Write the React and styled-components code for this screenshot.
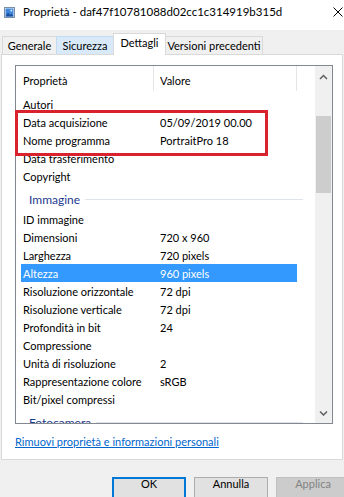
import React from 'react';
import styled, { createGlobalStyle } from 'styled-components';

const GlobalStyle = createGlobalStyle`
    html, body {
        margin: 0;
        padding: 0;
    }
    body {
        font-family: Lato, "Liberation Sans", sans-serif;
        font-size: 11px;
        color: #000;
    }
`

const Window = styled.div`
    width: 344px;
    height: 497px;
    overflow: hidden;
    background: #f0f0f0;
    display: flex;
    flex-direction: column;
`

const TitleBar = styled.div`
    height: 30px;
    flex: none;
    box-sizing: border-box;
    background: #fff;
    display: flex;
    align-items: flex-start;
    padding: 3px 0 0 4px;
`

const TitleIcon = styled.svg`
    margin: 4px 8px 0 0;
    flex: none;
`

const TitleText = styled.span`
    font-size: 11.5px;
    line-height: 18px;
    white-space: nowrap;
`

const CloseIcon = styled.svg`
    margin: 4px 1px 0 auto;
    flex: none;
`

const TabStrip = styled.div`
    height: 25px;
    margin-bottom: -1px;
    padding-left: 2px;
    display: flex;
    align-items: flex-end;
    position: relative;
    z-index: 1;
    flex: none;
`

const Tab = styled.div`
    box-sizing: border-box;
    width: ${p => p.$w}px;
    margin-left: ${p => (p.$first ? 0 : -1)}px;
    height: ${p => (p.$active ? 22 : 18)}px;
    margin-bottom: ${p => (p.$active ? 0 : 1)}px;
    padding-bottom: ${p => (p.$active ? 3 : 0)}px;
    border: 1px solid ${p => (p.$hover ? '#c3dcf3' : '#d9d9d9')};
    border-bottom: none;
    background: ${p => (p.$active ? '#fff' : p.$hover ? '#d8eaf9' : '#f0f0f0')};
    position: relative;
    z-index: ${p => (p.$active ? 2 : 1)};
    display: flex;
    align-items: center;
    justify-content: center;
    line-height: 16px;
    white-space: nowrap;
`

const Panel = styled.div`
    position: relative;
    margin-left: 1px;
    width: 342px;
    height: 406px;
    flex: none;
    box-sizing: border-box;
    background: #fff;
    border: 1px solid #d9d9d9;
    padding: 10px 0 0 13px;
`

const ListBox = styled.div`
    width: 318px;
    height: 359px;
    box-sizing: border-box;
    border: 1px solid #828790;
    display: flex;
    background: #fff;
`

const Viewport = styled.div`
    flex: 1;
    min-width: 0;
    display: flex;
    flex-direction: column;
    overflow: hidden;
`

const Header = styled.div`
    height: 25px;
    flex: none;
    display: flex;
`

const HeaderCell = styled.div`
    width: ${p => p.$w}px;
    box-sizing: border-box;
    border-right: 1px solid #e5e5e5;
    padding: 6px 0 0 ${p => p.$pad}px;
    line-height: 17px;
`

const Body = styled.div`
    flex: 1;
    overflow: hidden;
`

const Content = styled.div`
    margin-top: -21px;
`

const Row = styled.div`
    margin-left: 5px;
    width: 276px;
    height: 18px;
    box-sizing: border-box;
    padding: 1px 0 0 2px;
    line-height: 17px;
    display: grid;
    grid-template-columns: 137px 1fr;
    white-space: nowrap;
    background: ${p => (p.$selected ? '#3399ff' : 'transparent')};
    color: ${p => (p.$selected ? '#fff' : '#000')};
`

const GroupRow = styled.div`
    margin-left: 5px;
    width: 282px;
    height: 25px;
    box-sizing: border-box;
    padding: 6px 0 0 8px;
    line-height: 17px;
    font-size: 12px;
    display: flex;
    align-items: flex-start;
    color: #1e3a8e;
`

const GroupLine = styled.div`
    flex: 1;
    height: 1px;
    margin: 8px 0 0 5px;
    background: #dfe3ea;
`

const Scrollbar = styled.div`
    width: 17px;
    flex: none;
    background: #f0f0f0;
    display: flex;
    flex-direction: column;
`

const ArrowButton = styled.div`
    height: 21px;
    flex: none;
    display: flex;
    align-items: center;
    justify-content: center;
`

const Track = styled.div`
    flex: 1;
    padding-top: 29px;
`

const Thumb = styled.div`
    height: 77px;
    margin: 0 1px;
    background: #cdcdcd;
`

const Highlight = styled.div`
    position: absolute;
    left: 13px;
    top: 55px;
    width: 253px;
    height: 46px;
    box-sizing: border-box;
    border: 3px solid #d9222e;
    pointer-events: none;
`

const Link = styled.a`
    display: block;
    margin-top: 10px;
    line-height: 16px;
    color: #0066cc;
    text-decoration: underline;
    white-space: nowrap;
`

const Footer = styled.div`
    flex: 1;
    display: flex;
    gap: 8px;
    padding: 17px 0 0 112px;
`

const Button = styled.div`
    width: 74px;
    height: 23px;
    flex: none;
    box-sizing: border-box;
    border: 1px solid ${p => (p.$default ? '#0078d7' : p.$disabled ? '#bfbfbf' : '#adadad')};
    box-shadow: ${p => (p.$default ? 'inset 0 0 0 1px #0078d7' : 'none')};
    background: ${p => (p.$disabled ? '#cccccc' : '#e1e1e1')};
    color: ${p => (p.$disabled ? '#838383' : '#000')};
    padding-bottom: 10px;
    line-height: 10px;
    display: flex;
    align-items: center;
    justify-content: center;
`

const rows = [
    { group: 'Origine' },
    { name: 'Autori' },
    { name: 'Data acquisizione', value: '05/09/2019 00.00' },
    { name: 'Nome programma', value: 'PortraitPro 18' },
    { name: 'Data trasferimento' },
    { name: 'Copyright' },
    { group: 'Immagine' },
    { name: 'ID immagine' },
    { name: 'Dimensioni', value: '720 x 960' },
    { name: 'Larghezza', value: '720 pixels' },
    { name: 'Altezza', value: '960 pixels', selected: true },
    { name: 'Risoluzione orizzontale', value: '72 dpi' },
    { name: 'Risoluzione verticale', value: '72 dpi' },
    { name: 'Profondità in bit', value: '24' },
    { name: 'Compressione' },
    { name: 'Unità di risoluzione', value: '2' },
    { name: 'Rappresentazione colore', value: 'sRGB' },
    { name: 'Bit/pixel compressi' },
    { group: 'Fotocamera' },
];

const tabs = [
    { label: 'Generale', w: 55 },
    { label: 'Sicurezza', w: 58, hover: true },
    { label: 'Dettagli', w: 53, active: true },
    { label: 'Versioni precedenti', w: 98 },
];

const Chevron = ({ down }) => (
    <svg width="9" height="6" viewBox="0 0 9 6">
        <path
            d={down ? 'M1 1.5 L4.5 5 L8 1.5' : 'M1 5 L4.5 1.5 L8 5'}
            fill="none"
            stroke="#606060"
            strokeWidth="1.5"
        />
    </svg>
)

const App = () => {
    return (
        <Window>
            <GlobalStyle />
            <TitleBar>
                <TitleIcon width="11" height="11" viewBox="0 0 11 11">
                    <rect x="0.5" y="0.5" width="10" height="10" fill="#eef3f9" stroke="#7d8fa6" />
                    <rect x="1.5" y="1.5" width="8" height="8" fill="#3f86dc" />
                    <path d="M1.5 9.5 L4 5.5 L6 8 L7.5 6.5 L9.5 9.5 Z" fill="#1c4f9e" />
                    <circle cx="7.3" cy="3.6" r="1" fill="#dbe9fa" />
                </TitleIcon>
                <TitleText>Proprietà - daf47f10781088d02cc1c314919b315d</TitleText>
                <CloseIcon width="10" height="10" viewBox="0 0 10 10">
                    <path d="M0.5 0.5 L9.5 9.5 M9.5 0.5 L0.5 9.5" stroke="#000" strokeWidth="1" />
                </CloseIcon>
            </TitleBar>

            <TabStrip>
                {tabs.map((t, i) => (
                    <Tab key={t.label} $w={t.w} $first={i === 0} $active={t.active} $hover={t.hover}>
                        {t.label}
                    </Tab>
                ))}
            </TabStrip>

            <Panel>
                <ListBox>
                    <Viewport>
                        <Header>
                            <HeaderCell $w={138} $pad={7}>Proprietà</HeaderCell>
                            <HeaderCell $w={143} $pad={6}>Valore</HeaderCell>
                        </Header>
                        <Body>
                            <Content>
                                {rows.map((r, i) =>
                                    r.group ? (
                                        <GroupRow key={i}>
                                            <span>{r.group}</span>
                                            <GroupLine />
                                        </GroupRow>
                                    ) : (
                                        <Row key={i} $selected={r.selected}>
                                            <span>{r.name}</span>
                                            <span>{r.value || ''}</span>
                                        </Row>
                                    )
                                )}
                            </Content>
                        </Body>
                    </Viewport>
                    <Scrollbar>
                        <ArrowButton><Chevron /></ArrowButton>
                        <Track><Thumb /></Track>
                        <ArrowButton><Chevron down /></ArrowButton>
                    </Scrollbar>
                </ListBox>
                <Link>Rimuovi proprietà e informazioni personali</Link>
                <Highlight />
            </Panel>

            <Footer>
                <Button $default>OK</Button>
                <Button>Annulla</Button>
                <Button $disabled>Applica</Button>
            </Footer>
        </Window>
    )
}

export default App;
